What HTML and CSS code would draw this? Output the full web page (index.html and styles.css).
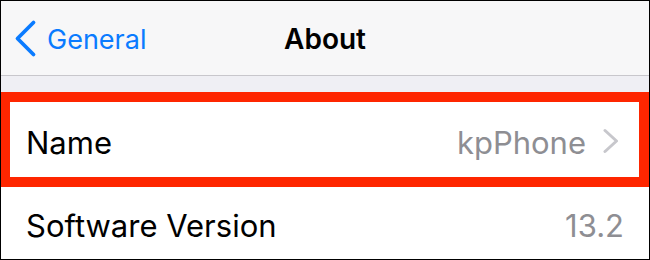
FILE: index.html
```html
<!DOCTYPE html>
<html>
<head>
<meta charset="utf-8">
<link rel="stylesheet" href="styles.css">
</head>
<body>
<div class="frame">
  <header class="navbar">
    <div class="nav-left">
      <svg class="back-icon" width="24" height="40" viewBox="0 0 24 40">
        <polyline points="19.5,3.5 3.5,19.5 19.5,35.5" fill="none" stroke="#0a7bff" stroke-width="3.8" stroke-linecap="round" stroke-linejoin="round"/>
      </svg>
      <span class="back-label">General</span>
    </div>
    <div class="nav-title">About</div>
    <div class="nav-right"></div>
  </header>
  <div class="band"></div>
  <div class="row row-highlight">
    <span class="row-label">Name</span>
    <span class="row-value">kpPhone</span>
    <svg class="disclosure" width="16" height="26" viewBox="0 0 16 26">
      <polyline points="2,2.5 13.5,13 2,23.5" fill="none" stroke="#c7c7cc" stroke-width="3" stroke-linecap="round" stroke-linejoin="round"/>
    </svg>
  </div>
  <div class="row row-plain">
    <span class="row-label">Software Version</span>
    <span class="row-value">13.2</span>
  </div>
</div>
</body>
</html>
```

FILE: styles.css
```css
html, body {
  margin: 0;
  padding: 0;
  background: #ffffff;
}

.frame {
  box-sizing: border-box;
  width: 650px;
  height: 260px;
  border: 1px solid #000000;
  background: #ffffff;
  font-family: Inter, "Liberation Sans", Arial, sans-serif;
  display: flex;
  flex-direction: column;
  overflow: hidden;
}

.navbar {
  box-sizing: border-box;
  height: 75px;
  padding-top: 2px;
  background: #f7f7f8;
  border-bottom: 1px solid #c8c7cc;
  display: grid;
  grid-template-columns: 1fr auto 1fr;
  align-items: center;
}

.nav-left {
  display: flex;
  align-items: center;
  padding-left: 13px;
}

.back-icon {
  display: block;
  margin-top: -1px;
  margin-right: 9px;
}

.back-label {
  font-size: 27px;
  color: #0a7bff;
}

.nav-title {
  font-size: 28px;
  font-weight: 600;
  color: #000000;
}

.band {
  height: 16px;
  background: #efeff4;
}

.row {
  display: flex;
  align-items: center;
  box-sizing: border-box;
  font-size: 31px;
}

.row-highlight {
  margin-left: -1px;
  height: 95px;
  border: 10px solid #fe2600;
  padding: 6px 20px 0 16px;
  background: #ffffff;
}

.row-plain {
  flex: 1;
  padding: 5px 25px 0 25px;
}

.row-label {
  flex: 1;
  color: #000000;
}

.row-value {
  color: #8e8e93;
}

.disclosure {
  display: block;
  margin-left: 17px;
  margin-top: -4px;
}
```
